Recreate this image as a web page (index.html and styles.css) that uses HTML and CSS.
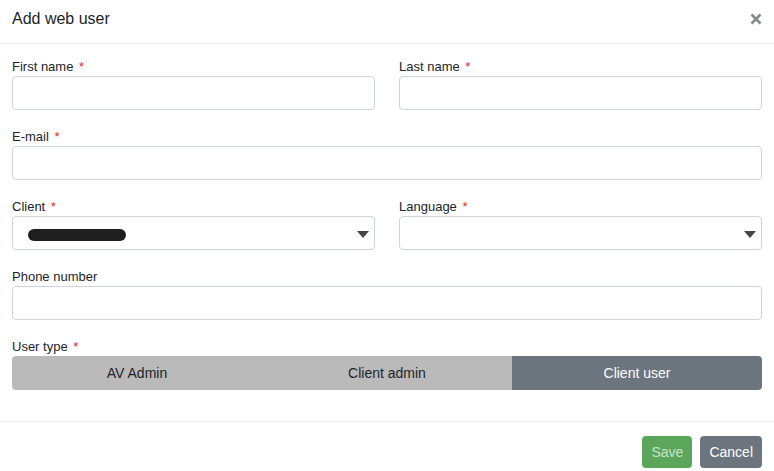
FILE: index.html
```html
<!DOCTYPE html>
<html>
<head>
<meta charset="utf-8">
<link rel="stylesheet" href="styles.css">
</head>
<body>
<div class="modal">
  <div class="modal-header">
    <div class="title">Add web user</div>
    <div class="close">
      <svg width="12" height="12" viewBox="0 0 12 12"><path d="M1.5 1.5 L10.5 10.5 M10.5 1.5 L1.5 10.5" stroke="#858a8f" stroke-width="2.6" stroke-linecap="butt"/></svg>
    </div>
  </div>
  <div class="modal-body">
    <div class="row">
      <div class="group">
        <div class="label">First name <span class="req">*</span></div>
        <div class="input"></div>
      </div>
      <div class="group">
        <div class="label">Last name <span class="req">*</span></div>
        <div class="input"></div>
      </div>
    </div>
    <div class="group">
      <div class="label">E-mail <span class="req">*</span></div>
      <div class="input"></div>
    </div>
    <div class="row">
      <div class="group">
        <div class="label">Client <span class="req">*</span></div>
        <div class="input select">
          <span class="redacted"></span>
          <span class="caret"></span>
        </div>
      </div>
      <div class="group">
        <div class="label">Language <span class="req">*</span></div>
        <div class="input select">
          <span></span>
          <span class="caret"></span>
        </div>
      </div>
    </div>
    <div class="group">
      <div class="label">Phone number</div>
      <div class="input"></div>
    </div>
    <div class="group">
      <div class="label">User type <span class="req">*</span></div>
      <div class="segmented">
        <div class="seg">AV Admin</div>
        <div class="seg">Client admin</div>
        <div class="seg active">Client user</div>
      </div>
    </div>
  </div>
  <div class="modal-footer">
    <div class="btn save">Save</div>
    <div class="btn cancel">Cancel</div>
  </div>
</div>
</body>
</html>
```

FILE: styles.css
```css
* { box-sizing: border-box; }
html, body { margin: 0; padding: 0; background: #fff; }
body {
  font-family: "Liberation Sans", Arial, sans-serif;
  color: #212529;
  width: 774px;
  height: 471px;
  overflow: hidden;
}
.modal { width: 774px; }
.modal-header {
  height: 44px;
  border-bottom: 1px solid #e9ecef;
  display: flex;
  align-items: center;
  justify-content: space-between;
  padding: 0 12px 0 12px;
}
.title {
  font-size: 16px;
  line-height: 20px;
  color: #212529;
  margin-top: -6px;
}
.close {
  display: flex;
  margin-top: -6px;
}
.modal-body {
  padding: 14px 12px 31px 12px;
  display: flex;
  flex-direction: column;
  gap: 18px;
}
.row {
  display: grid;
  grid-template-columns: 1fr 1fr;
  column-gap: 24px;
}
.group { display: flex; flex-direction: column; }
.label {
  font-size: 13px;
  line-height: 17px;
  margin-bottom: 1px;
  color: #212529;
}
.req { color: #e3262b; margin-left: 2px; }
.input {
  height: 34px;
  border: 1px solid #ced4da;
  border-radius: 4px;
  background: #fff;
}
.select {
  display: flex;
  align-items: center;
  justify-content: space-between;
  padding: 0 5px 0 15px;
}
.redacted {
  display: block;
  width: 98px;
  height: 12px;
  background: #1e1e1e;
  border-radius: 6px;
  margin-top: 3px;
}
.caret {
  width: 0;
  height: 0;
  border-left: 6.5px solid transparent;
  border-right: 6.5px solid transparent;
  border-top: 7px solid #444;
  margin-top: 2px;
}
.segmented {
  display: flex;
  height: 34px;
  border-radius: 4px;
  overflow: hidden;
}
.seg {
  flex: 1;
  display: flex;
  align-items: center;
  justify-content: center;
  background: #bababa;
  color: #212529;
  font-size: 14px;
}
.seg.active { background: #6c757d; color: #fff; }
.modal-footer {
  border-top: 1px solid #e9ecef;
  display: flex;
  justify-content: flex-end;
  gap: 8px;
  padding: 14px 12px 0 12px;
}
.btn {
  height: 32px;
  padding: 0 9px;
  border-radius: 4px;
  font-size: 14px;
  display: flex;
  align-items: center;
}
.save { background: #5ba65b; color: #c9e4c9; }
.cancel { background: #6c757d; color: #fff; }
```
